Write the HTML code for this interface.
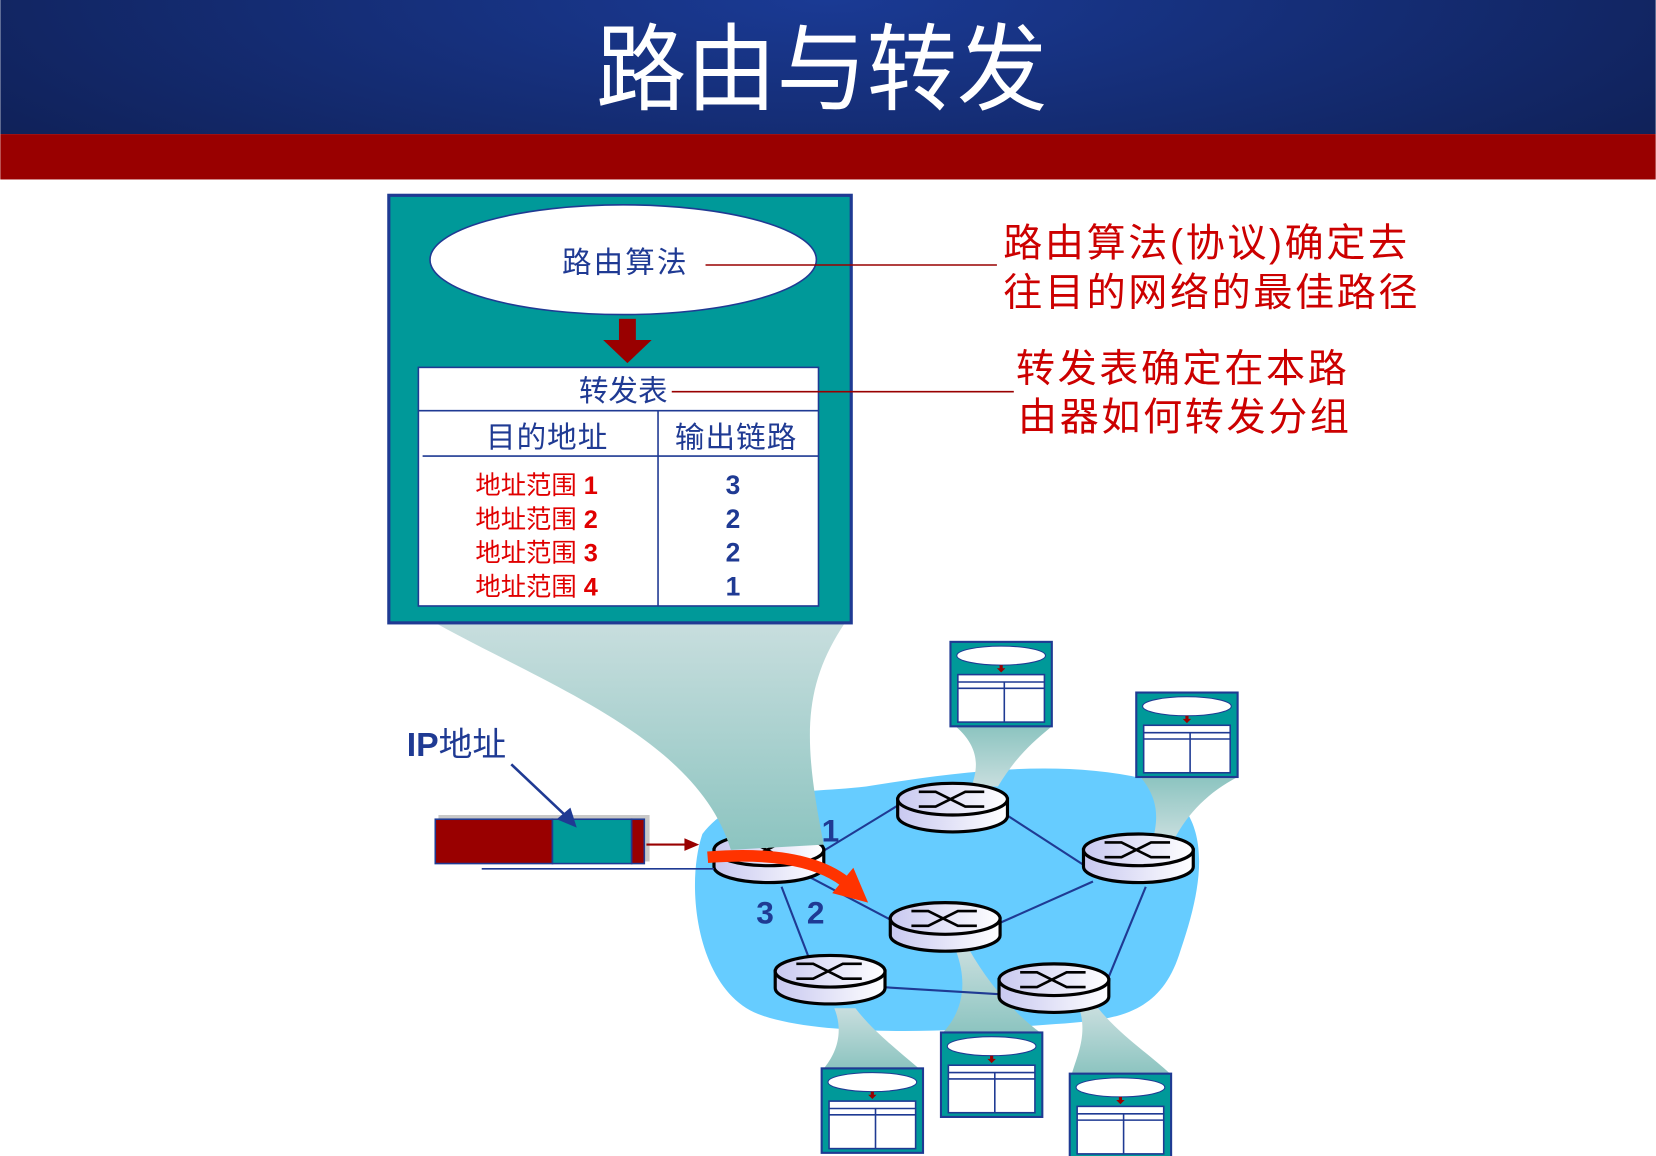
<!DOCTYPE html>
<html><head><meta charset="utf-8"><style>
html,body{margin:0;padding:0;background:#fff;}
svg{display:block;}
text{font-family:"Liberation Sans","Noto Sans CJK SC",sans-serif;}
</style></head><body>
<svg width="1656" height="1156" viewBox="0 0 1568 1095" xmlns="http://www.w3.org/2000/svg">
<defs>
<radialGradient id="hd" cx="0.5" cy="0" r="0.7" gradientTransform="scale(1,3)">
<stop offset="0" stop-color="#1a3a94"/><stop offset="1" stop-color="#0e1d4f"/></radialGradient>
<linearGradient id="beam" x1="0" y1="0" x2="0" y2="1"><stop offset="0" stop-color="#c8dede"/><stop offset="1" stop-color="#8cc4c0"/></linearGradient>
<linearGradient id="beam2" x1="0" y1="1" x2="0" y2="0"><stop offset="0" stop-color="#c8dede"/><stop offset="1" stop-color="#8cc4c0"/></linearGradient>
<linearGradient id="rt" x1="0" y1="0" x2="1" y2="0"><stop offset="0" stop-color="#c8c8f0"/><stop offset="1" stop-color="#ffffff"/></linearGradient>
<g id="router">
<path d="M-52,0 L-52,16 A52,15 0 0 0 52,16 L52,0 Z" fill="url(#rt)" stroke="#000" stroke-width="3"/>
<ellipse cx="0" cy="0" rx="52" ry="15" fill="url(#rt)" stroke="#000" stroke-width="3"/>
<path d="M-32,-7 h16 l28,14 h18 M-32,7 h16 l28,-14 h18" fill="none" stroke="#000" stroke-width="2.5"/>
</g>
<g id="tbl">
<rect x="0" y="0" width="96" height="80" fill="#009999" stroke="#1f3a93" stroke-width="2"/>
<ellipse cx="48" cy="13" rx="42" ry="9" fill="#fff" stroke="#1f3a93" stroke-width="1"/>
<path d="M48,22 v4" stroke="#990000" stroke-width="3"/><path d="M44,25 h8 l-4,4z" fill="#990000"/>
<rect x="7" y="31" width="82" height="45" fill="#fff" stroke="#1f3a93" stroke-width="1.5"/>
<path d="M7,38 h82 M7,44 h82 M51,38 v38" stroke="#1f3a93" stroke-width="1.5"/>
</g>
</defs>
<rect x="0" y="0" width="1568" height="127" fill="url(#hd)"/>
<rect x="0" y="127" width="1568" height="43" fill="#990000"/>
<text x="778" y="97" text-anchor="middle" font-size="90" fill="#fff" transform="translate(778,0) scale(0.95,1) translate(-778,0)">路由与转发</text>

<path d="M665,790 C700,745 760,752 820,745 C900,732 1000,718 1085,738 C1150,765 1142,830 1118,900 C1100,960 1060,966 1000,970 C900,978 780,982 722,962 C660,942 648,840 665,790 Z" fill="#66ccff"/>

<path d="M905,688 C930,710 925,730 920,745 L945,745 C960,720 975,705 996,688 Z" fill="url(#beam2)"/>
<path d="M1080,736 C1100,760 1095,780 1092,795 L1112,795 C1125,770 1145,750 1172,736 Z" fill="url(#beam2)"/>
<path d="M790,955 C800,980 790,1000 780,1012 L870,1012 C850,995 825,975 810,955 Z" fill="url(#beam)"/>
<path d="M905,900 C920,940 905,965 893,978 L985,978 C960,960 935,930 918,900 Z" fill="url(#beam)"/>
<path d="M1022,955 C1030,980 1020,1000 1015,1017 L1108,1017 C1090,1000 1060,980 1040,955 Z" fill="url(#beam)"/>

<g stroke="#1f3a93" stroke-width="2">
<line x1="765" y1="815" x2="860" y2="757"/>
<line x1="950" y1="770" x2="1035" y2="825"/>
<line x1="1035" y1="835" x2="945" y2="875"/>
<line x1="1085" y1="840" x2="1048" y2="930"/>
<line x1="765" y1="830" x2="860" y2="880"/>
<line x1="740" y1="840" x2="765" y2="905"/>
<line x1="835" y1="935" x2="950" y2="942"/>
</g>
<use href="#router" x="902" y="757"/>
<use href="#router" x="1078" y="805"/>
<use href="#router" x="895" y="870"/>
<use href="#router" x="786" y="920"/>
<use href="#router" x="998" y="928"/>
<use href="#router" x="728" y="805"/>

<path d="M412,590 C520,650 660,700 692,805 L780,800 C760,700 760,650 800,590 Z" fill="url(#beam)"/>
<path d="M670,812 C720,808 770,812 800,835" fill="none" stroke="#ff3300" stroke-width="11"/>
<path d="M788,846 L822,855 L808,822 Z" fill="#ff3300"/>
<g font-weight="bold" fill="#1f3a93" font-size="30">
<text x="778" y="797">1</text><text x="716" y="875">3</text><text x="764" y="875">2</text></g>

<use href="#tbl" x="900" y="608"/>
<use href="#tbl" x="1076" y="656"/>
<use href="#tbl" x="778" y="1012"/>
<use href="#tbl" x="891" y="978"/>
<use href="#tbl" x="1013" y="1017"/>

<rect x="368" y="185" width="438" height="405" fill="#009999" stroke="#1f3a93" stroke-width="3"/>
<ellipse cx="590" cy="246" rx="183" ry="52" fill="#fff" stroke="#1f3a93" stroke-width="1.5"/>
<text x="592" y="258" text-anchor="middle" font-size="28" fill="#1f3a93" letter-spacing="2">路由算法</text>
<rect x="586" y="302" width="16" height="22" fill="#990000"/>
<path d="M571,322 L617,322 L594,344 Z" fill="#990000"/>
<rect x="396" y="348" width="379" height="226" fill="#fff" stroke="#1f3a93" stroke-width="1.5"/>
<path d="M396,389 H775 M400,432 H775 M623,389 V574" stroke="#1f3a93" stroke-width="1.5"/>
<text x="590" y="380" text-anchor="middle" font-size="28" fill="#1f3a93">转发表</text>
<text x="518" y="424" text-anchor="middle" font-size="28" fill="#1f3a93" letter-spacing="1">目的地址</text>
<text x="697" y="424" text-anchor="middle" font-size="28" fill="#1f3a93" letter-spacing="1">输出链路</text>
<g font-size="24" fill="#e00000">
<text x="450" y="468">地址范围 <tspan font-weight="bold">1</tspan></text>
<text x="450" y="500">地址范围 <tspan font-weight="bold">2</tspan></text>
<text x="450" y="532">地址范围 <tspan font-weight="bold">3</tspan></text>
<text x="450" y="564">地址范围 <tspan font-weight="bold">4</tspan></text>
</g>
<g font-size="25" fill="#1f3a93" font-weight="bold" text-anchor="middle">
<text x="694" y="468">3</text><text x="694" y="500">2</text><text x="694" y="532">2</text><text x="694" y="564">1</text></g>

<path d="M668,251 H944 M636,371 H960" stroke="#990000" stroke-width="1.5"/>
<g font-size="37" fill="#cc0000" letter-spacing="2.5">
<text x="950" y="243">路由算法(协议)确定去</text>
<text x="950" y="290">往目的网络的最佳路径</text>
<text x="962" y="362">转发表确定在本路</text>
<text x="964" y="408">由器如何转发分组</text>
</g>

<text x="385" y="716" font-size="32" fill="#1f3a93"><tspan font-weight="bold">IP</tspan>地址</text>
<rect x="415" y="772" width="200" height="44" fill="#c8c8c8"/>
<rect x="412" y="776" width="111" height="42" fill="#990000" stroke="#1f3a93" stroke-width="1.5"/>
<rect x="523" y="776" width="75" height="42" fill="#009999" stroke="#1f3a93" stroke-width="1.5"/>
<rect x="598" y="776" width="12" height="42" fill="#990000" stroke="#1f3a93" stroke-width="1.5"/>
<line x1="484" y1="724" x2="538" y2="775" stroke="#1f3a93" stroke-width="2.5"/>
<path d="M546,784 L527,776 L540,765 Z" fill="#1f3a93"/>
<line x1="612" y1="800" x2="650" y2="800" stroke="#990000" stroke-width="2"/>
<path d="M662,800 L648,794 L648,806 Z" fill="#990000"/>
<line x1="456" y1="823" x2="676" y2="823" stroke="#1f3a93" stroke-width="1.5"/>
</svg>
</body></html>
